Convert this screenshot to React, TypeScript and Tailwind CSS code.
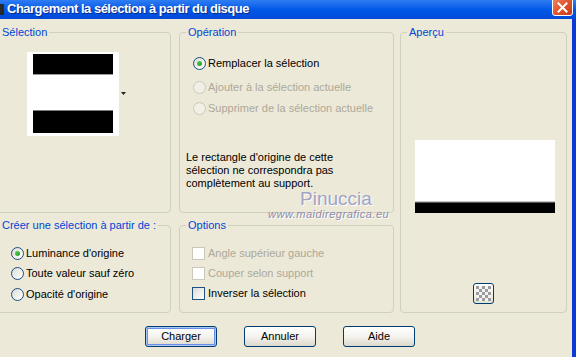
import type { ReactNode } from "react";

const font = "font-['Liberation_Sans',Arial,sans-serif]";

function Group({
  title,
  className,
  children,
}: {
  title: string;
  className?: string;
  children?: ReactNode;
}) {
  return (
    <fieldset
      className={`rounded-[4px] border border-[#d0d0bf] ${className ?? ""}`}
    >
      <legend className="ml-[6px] px-[2px] leading-[13px] text-[#0046d5]">
        {title}
      </legend>
      {children}
    </fieldset>
  );
}

function Radio({
  checked,
  disabled,
  label,
  className,
}: {
  checked?: boolean;
  disabled?: boolean;
  label: string;
  className?: string;
}) {
  return (
    <div className={`flex items-center ${className ?? ""}`}>
      <span
        className={`flex h-[13px] w-[13px] items-center justify-center rounded-full border ${
          disabled
            ? "border-[#cac8bb] bg-[#f1efe6]"
            : "border-[#1c5180] bg-gradient-to-br from-[#dcdcd5] to-white"
        }`}
      >
        {checked && (
          <span className="h-[5px] w-[5px] rounded-full bg-gradient-to-br from-[#55d451] to-[#1e9a1e]" />
        )}
      </span>
      <span
        className={`ml-[2px] leading-[13px] ${
          disabled ? "text-[#aca899]" : "text-black"
        }`}
      >
        {label}
      </span>
    </div>
  );
}

function Check({
  disabled,
  label,
  className,
}: {
  disabled?: boolean;
  label: string;
  className?: string;
}) {
  return (
    <div className={`flex items-center ${className ?? ""}`}>
      <span
        className={`h-[13px] w-[13px] border ${
          disabled
            ? "border-[#cac8bb] bg-white"
            : "border-[#1c5180] bg-gradient-to-br from-[#dcdcd5] to-white"
        }`}
      />
      <span
        className={`ml-[3px] leading-[13px] ${
          disabled ? "text-[#aca899]" : "text-black"
        }`}
      >
        {label}
      </span>
    </div>
  );
}

function Button({ label, primary }: { label: string; primary?: boolean }) {
  return (
    <button
      type="button"
      className={`flex h-[21px] w-[72px] items-center justify-center rounded-[3px] border border-[#003c74] bg-gradient-to-b from-white via-[#f4f3ee] to-[#dcd8cc] leading-[13px] text-black ${
        primary ? "shadow-[inset_0_0_0_1px_#a8c8f5,inset_0_0_0_2px_#6c8ee8]" : ""
      }`}
    >
      {label}
    </button>
  );
}

export default function App() {
  return (
    <div className={`${font} h-[357px] w-[576px] overflow-hidden bg-[#0a3bd6] text-[11px]`}>
      {/* title bar */}
      <div className="relative flex h-[19px] items-start bg-gradient-to-b from-[#2e7df4] via-[#0058e6] to-[#0049d9]">
        <div className="mt-[4px] h-[11px] w-[4px] bg-[#2a2a2a]" />
        <div className="ml-[3px] pt-[1px] text-[13px] font-bold leading-[15px] tracking-[-0.5px] text-white [text-shadow:1px_1px_0_#0a2a8a]">
          Chargement la sélection à partir du disque
        </div>
        <div className="absolute left-[552px] top-[-4px] flex h-[20px] w-[21px] items-center justify-center rounded-[3px] border border-white bg-gradient-to-br from-[#f08a64] via-[#e0552e] to-[#c5391a]">
          <svg width="11" height="11" viewBox="0 0 11 11" className="mt-[3px]">
            <path d="M1.5 1.5 L9.5 9.5 M9.5 1.5 L1.5 9.5" stroke="white" strokeWidth="2" strokeLinecap="square" />
          </svg>
        </div>
      </div>

      {/* body */}
      <div className="relative h-[338px] w-[572px] overflow-hidden bg-[#ece9d8] pt-[7px]">
        <div className="flex">
          {/* left column */}
          <div className="-ml-[7px] flex w-[178px] flex-col gap-[6px]">
            <Group title="Sélection" className="h-[187px]">
              <div className="ml-[33px] mt-[13px] flex items-center">
                <div className="flex h-[84px] w-[92px] flex-col bg-white pl-[6px] pt-[2px]">
                  <div className="h-[21px] w-[80px] border-b border-[#9a9a9a] bg-black" />
                  <div className="h-[35px]" />
                  <div className="h-[23px] w-[80px] border-t border-[#7a7a7a] bg-black" />
                </div>
                <svg width="5" height="3" viewBox="0 0 5 3" className="ml-[2px] mt-[-1px]">
                  <path d="M0 0 H5 L2.5 3 Z" fill="#222" />
                </svg>
              </div>
            </Group>
            <Group title="Créer une sélection à partir de :" className="h-[94px]">
              <Radio checked label="Luminance d'origine" className="ml-[17px] mt-[15px]" />
              <Radio label="Toute valeur sauf zéro" className="ml-[17px] mt-[7px]" />
              <Radio label="Opacité d'origine" className="ml-[17px] mt-[8px]" />
            </Group>
          </div>

          {/* middle column */}
          <div className="ml-[8px] flex w-[215px] flex-col gap-[6px]">
            <Group title="Opération" className="h-[187px]">
              <Radio checked label="Remplacer la sélection" className="ml-[13px] mt-[18px]" />
              <Radio disabled label="Ajouter à la sélection actuelle" className="ml-[13px] mt-[11px]" />
              <Radio disabled label="Supprimer de la sélection actuelle" className="ml-[13px] mt-[8px]" />
              <p className="ml-[6px] mt-[36px] leading-[13px] text-black">
                Le rectangle d'origine de cette
                <br />
                sélection ne correspondra pas
                <br />
                complètement au support.
              </p>
            </Group>
            <Group title="Options" className="h-[94px]">
              <Check disabled label="Angle supérieur gauche" className="ml-[12px] mt-[15px]" />
              <Check disabled label="Couper selon support" className="ml-[12px] mt-[7px]" />
              <Check label="Inverser la sélection" className="ml-[12px] mt-[7px]" />
            </Group>
          </div>

          {/* right column */}
          <Group title="Aperçu" className="ml-[6px] h-[287px] w-[167px]">
            <div className="ml-[14px] mt-[101px] flex h-[73px] w-[140px] flex-col bg-white">
              <div className="flex-1" />
              <div className="h-[1px] bg-[#c8c8c8]" />
              <div className="h-[1px] bg-[#555]" />
              <div className="h-[10px] bg-black" />
            </div>
            <div className="ml-[72px] mt-[70px] flex h-[21px] w-[21px] items-center justify-center rounded-[3px] border border-[#003c74] bg-gradient-to-b from-white to-[#e4e1d6]">
              <svg width="15" height="15" viewBox="0 0 15 15">
                <rect width="15" height="15" fill="#f4f4f4" />
                <rect x="0" y="0" width="3" height="3" fill="#9c9c9c" />
                <rect x="6" y="0" width="3" height="3" fill="#9c9c9c" />
                <rect x="12" y="0" width="3" height="3" fill="#9c9c9c" />
                <rect x="3" y="3" width="3" height="3" fill="#9c9c9c" />
                <rect x="9" y="3" width="3" height="3" fill="#9c9c9c" />
                <rect x="0" y="6" width="3" height="3" fill="#9c9c9c" />
                <rect x="6" y="6" width="3" height="3" fill="#9c9c9c" />
                <rect x="12" y="6" width="3" height="3" fill="#9c9c9c" />
                <rect x="3" y="9" width="3" height="3" fill="#9c9c9c" />
                <rect x="9" y="9" width="3" height="3" fill="#9c9c9c" />
                <rect x="0" y="12" width="3" height="3" fill="#9c9c9c" />
                <rect x="6" y="12" width="3" height="3" fill="#9c9c9c" />
                <rect x="12" y="12" width="3" height="3" fill="#9c9c9c" />
              </svg>
            </div>
          </Group>
        </div>

        {/* buttons */}
        <div className="ml-[145px] mt-[13px] flex gap-[27px]">
          <Button primary label="Charger" />
          <Button label="Annuler" />
          <Button label="Aide" />
        </div>

        {/* watermark */}
        <div className="pointer-events-none absolute left-[300px] top-[170px] text-[19px] leading-[20px] text-[#a3a3c6] [text-shadow:1px_1px_0_#ffffff]">
          Pinuccia
        </div>
        <div className="pointer-events-none absolute left-[268px] top-[189px] text-[11px] italic leading-[12px] tracking-[0.5px] text-[#8c8cab] [text-shadow:1px_1px_0_#ffffff]">
          www.maidiregrafica.eu
        </div>
      </div>
    </div>
  );
}
